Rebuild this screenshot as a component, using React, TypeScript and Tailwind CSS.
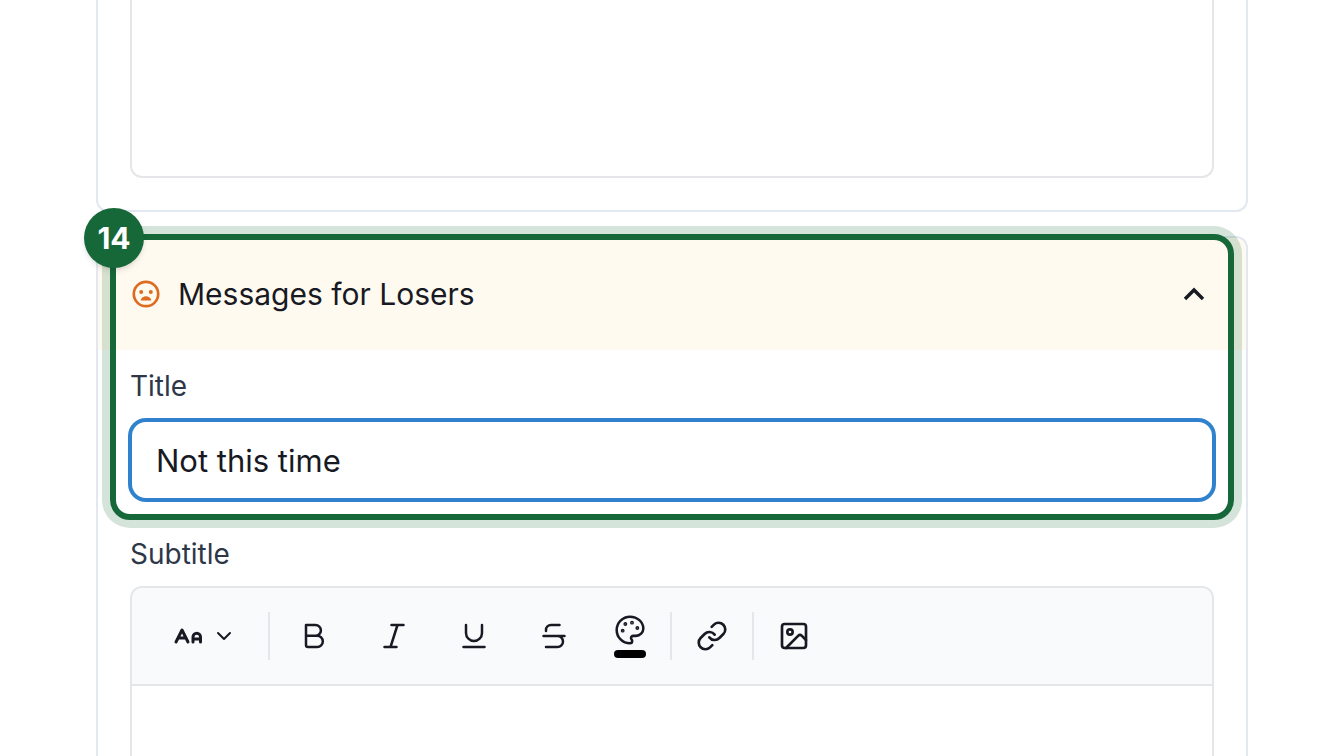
import { useState, type ReactNode } from 'react';
import { ChevronDown, Link, Image } from 'lucide-react';

function StrokeIcon({ children }: { children: ReactNode }) {
  return (
    <svg width="32" height="32" viewBox="0 0 32 32" fill="none" stroke="currentColor" strokeWidth="2.5" strokeLinecap="round" strokeLinejoin="round" aria-hidden="true">
      {children}
    </svg>
  );
}

function SadFace() {
  return (
    <svg width="32" height="32" viewBox="0 0 32 32" fill="currentColor" className="text-[#dd6b20]" aria-hidden="true">
      <circle cx="16" cy="16" r="12.2" fill="none" stroke="currentColor" strokeWidth="2.7" />
      <circle cx="11.2" cy="14" r="2" />
      <circle cx="20.8" cy="14" r="2" />
      <path d="M16 18.2c-2.400 0-4.400 1.400-5.200 3.500-.2.500.1.900.6.900h9.200c.5 0 .8-.4.6-.9-.8-2.100-2.800-3.500-5.200-3.500z" />
    </svg>
  );
}

function PaletteIcon() {
  return (
    <svg width="32" height="32" viewBox="0 0 24 24" fill="none" stroke="currentColor" strokeWidth="1.9" strokeLinecap="round" strokeLinejoin="round" aria-hidden="true">
      <g fill="currentColor">
        <circle cx="13.5" cy="6.5" r=".5" />
        <circle cx="17.5" cy="10.5" r=".5" />
        <circle cx="8.5" cy="7.5" r=".5" />
        <circle cx="6.5" cy="12.5" r=".5" />
      </g>
      <path d="M12 2C6.5 2 2 6.5 2 12s4.500 10 10 10c.926 0 1.648-.746 1.648-1.688 0-.437-.18-.835-.437-1.125-.29-.289-.438-.652-.438-1.125a1.640 1.640 0 0 1 1.668-1.668h1.996c3.051 0 5.555-2.503 5.555-5.554C21.965 6.012 17.461 2 12 2z" />
    </svg>
  );
}

const formatButtons = [
  { label: 'Bold', icon: <StrokeIcon><path d="M8 5h9.500a5.400 5.400 0 0 1 0 10.800H8zM8 15.800h11.200a5.600 5.600 0 0 1 0 11.200H10a2 2 0 0 1-2-2z" /></StrokeIcon> },
  { label: 'Italic', icon: <StrokeIcon><path d="M13.500 5h12M6.500 27h12M19.500 5l-7 22" /></StrokeIcon> },
  { label: 'Underline', icon: <StrokeIcon><path d="M8 5v8a8 8 0 0 0 16 0V5M5.500 27h21" /></StrokeIcon> },
  { label: 'Strikethrough', icon: <StrokeIcon><path d="M21.500 5H13a5 5 0 0 0-5 5v1M5.500 16h21M19.500 16a5.500 5.500 0 0 1 0 11H8" /></StrokeIcon> },
];

function Divider() {
  return <span className="h-12 w-0.5 shrink-0 bg-[#e4e6e9]" />;
}

function Toolbar() {
  return (
    <div role="toolbar" aria-label="Subtitle formatting" className="box-content flex h-24 items-center border-b-2 border-[#e4e6e9] bg-[#f9fafc]">
      <button type="button" aria-label="Text size" className="ml-10 flex h-12 w-24 items-center gap-2">
        <svg width="32" height="20" viewBox="0 0 32 20" fill="none" stroke="currentColor" strokeWidth="3" strokeLinecap="round" strokeLinejoin="round" aria-hidden="true">
          <path d="M4 16L10 4l6 12M6.500 12h7M21 16v-5a3.700 3.700 0 0 1 7.500 0v5M21 13h7.500" />
        </svg>
        <ChevronDown size={24} strokeWidth={2} />
      </button>
      <Divider />
      <div className="flex gap-8 px-5">
        {formatButtons.map((b) => (
          <button key={b.label} type="button" aria-label={b.label} className="flex size-12 items-center justify-center">
            {b.icon}
          </button>
        ))}
        <button type="button" aria-label="Text color" className="flex w-10 flex-col items-center justify-center gap-1">
          <PaletteIcon />
          <span className="h-2 w-8 rounded-full bg-black" />
        </button>
      </div>
      <Divider />
      <button type="button" aria-label="Insert link" className="flex h-12 w-20 items-center justify-center">
        <Link size={32} strokeWidth={2} />
      </button>
      <Divider />
      <button type="button" aria-label="Insert image" className="flex h-12 w-20 items-center justify-center">
        <Image size={32} strokeWidth={2} />
      </button>
    </div>
  );
}

export default function App() {
  const [open, setOpen] = useState(true);
  const [title, setTitle] = useState('Not this time');

  return (
    <main className="h-screen overflow-hidden bg-white px-24 font-['Inter',sans-serif] text-[#171923]">
      {/* Previous panel, scrolled mostly out of view */}
      <section className="rounded-b-xl border-2 border-t-0 border-[#e2e8f0] px-8 pb-8">
        <textarea aria-label="Winner message" className="block h-[178px] w-full resize-none rounded-b-xl border-2 border-t-0 border-[#e4e6e9] outline-none" />
      </section>

      <section className="relative mt-6 rounded-t-xl border-2 border-b-0 border-[#e2e8f0]">
        <h2>
          <button type="button" aria-expanded={open} onClick={() => setOpen(!open)} className="flex h-28 w-full items-center gap-4 rounded-t-xl bg-[#fffaf0] px-8 text-left">
            <SadFace />
            <span className="flex-1 text-[30px]">Messages for Losers</span>
            <svg width="40" height="40" viewBox="0 0 40 40" fill="none" stroke="currentColor" strokeWidth="3.4" aria-hidden="true">
              <path d="M11 25l9-9 9 9" />
            </svg>
          </button>
        </h2>

        {open && (
          <div className="px-8 pt-5">
            <label htmlFor="title" className="block text-[28px] leading-8 text-[#2d3748]">Title</label>
            <div className="-mx-0.5 mt-4">
              <input id="title" value={title} onChange={(e) => setTitle(e.target.value)} className="h-[84px] w-full rounded-[18px] border-4 border-[#3182ce] px-6 text-[31px] outline-none" />
            </div>
            <p id="subtitle" className="mt-9 text-[28px] leading-8 text-[#2d3748]">Subtitle</p>
            <div className="mt-4 overflow-hidden rounded-t-xl border-2 border-b-0 border-[#e4e6e9]">
              <Toolbar />
              <textarea aria-labelledby="subtitle" className="block h-40 w-full resize-none outline-none" />
            </div>
          </div>
        )}

        {/* Step highlight */}
        <div className="pointer-events-none absolute -top-1 right-3 left-3 h-[286px] rounded-[20px] border-[6px] border-[#166839] ring-8 ring-[#166839]/18">
          <span className="absolute -top-8 -left-8 flex size-[60px] items-center justify-center rounded-full bg-[#166839] text-[30px] font-bold text-white shadow-md">14</span>
        </div>
      </section>
    </main>
  );
}
